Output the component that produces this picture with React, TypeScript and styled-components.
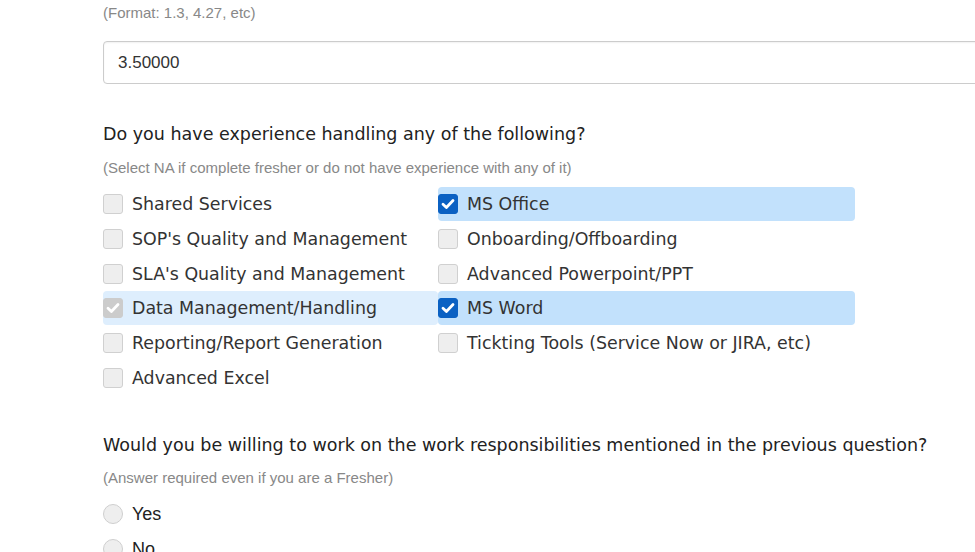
import React from 'react';
import styled, { createGlobalStyle } from 'styled-components';

const GlobalStyle = createGlobalStyle`
  html, body {
    margin: 0;
    padding: 0;
    background: #fff;
    overflow: hidden;
  }
`;

const Page = styled.div`
  padding: 3px 0 0 103px;
  width: 975px;
  height: 552px;
  box-sizing: border-box;
  overflow: hidden;
`;

const Hint = styled.div<{ $gapTop?: number }>`
  font-family: 'Liberation Sans', Arial, sans-serif;
  font-size: 15px;
  line-height: 20px;
  color: #888;
  margin-top: ${({ $gapTop }) => $gapTop ?? 0}px;
`;

const TextInput = styled.input`
  display: block;
  margin-top: 18px;
  width: 900px;
  height: 43px;
  box-sizing: border-box;
  border: 1px solid #ccc;
  border-radius: 4px;
  padding: 1px 14px 0;
  font-family: 'Liberation Sans', Arial, sans-serif;
  font-size: 17px;
  color: #333;
  box-shadow: inset 0 1px 2px rgba(0, 0, 0, 0.06);
  outline: none;
`;

const Question = styled.div<{ $gapTop: number }>`
  margin-top: ${({ $gapTop }) => $gapTop}px;
  font-family: 'DejaVu Sans', Verdana, sans-serif;
  font-size: 17.5px;
  line-height: 24px;
  color: #222;
`;

const OptionGrid = styled.div`
  margin-top: 9px;
  display: grid;
  grid-template-columns: 335px 417px;
  row-gap: 0.8px;
`;

const Option = styled.label<{ $state: 'on' | 'locked' | 'off' }>`
  display: flex;
  align-items: center;
  height: 34px;
  border-radius: 4px;
  background: ${({ $state }) =>
    $state === 'on' ? '#c2e1fc' : $state === 'locked' ? '#deeefd' : 'transparent'};
  font-family: 'DejaVu Sans', Verdana, sans-serif;
  font-size: 17.4px;
  color: #333;
`;

const Box = styled.span<{ $state: 'on' | 'locked' | 'off' }>`
  width: 20px;
  height: 20px;
  box-sizing: border-box;
  border-radius: 3px;
  margin-right: 9px;
  display: flex;
  align-items: center;
  justify-content: center;
  flex-shrink: 0;
  background: ${({ $state }) =>
    $state === 'on' ? '#0b61c3' : $state === 'locked' ? '#cccccc' : '#eeeeee'};
  border: 1px solid
    ${({ $state }) => ($state === 'on' ? '#0b61c3' : $state === 'locked' ? '#cccccc' : '#d0d0d0')};
`;

const RadioRow = styled.label`
  display: flex;
  align-items: center;
  height: 35px;
  font-family: 'Liberation Sans', Arial, sans-serif;
  font-size: 18px;
  color: #222;
`;

const RadioDot = styled.span`
  width: 20px;
  height: 20px;
  box-sizing: border-box;
  border-radius: 50%;
  border: 1px solid #cfcfcf;
  background: #eeeeee;
  margin-right: 9px;
  flex-shrink: 0;
`;

const RadioList = styled.div`
  margin-top: 9px;
`;

type State = 'on' | 'locked' | 'off';

const Tick = () => (
  <svg width="14" height="12" viewBox="0 0 14 12">
    <path d="M2 6.2 L5.4 9.4 L12 2.6" fill="none" stroke="#fff" strokeWidth="2.8" strokeLinecap="round" strokeLinejoin="round" />
  </svg>
);

const options: { label: string; state: State }[] = [
  { label: 'Shared Services', state: 'off' },
  { label: 'MS Office', state: 'on' },
  { label: "SOP's Quality and Management", state: 'off' },
  { label: 'Onboarding/Offboarding', state: 'off' },
  { label: "SLA's Quality and Management", state: 'off' },
  { label: 'Advanced Powerpoint/PPT', state: 'off' },
  { label: 'Data Management/Handling', state: 'locked' },
  { label: 'MS Word', state: 'on' },
  { label: 'Reporting/Report Generation', state: 'off' },
  { label: 'Tickting Tools (Service Now or JIRA, etc)', state: 'off' },
  { label: 'Advanced Excel', state: 'off' },
];

export default function App() {
  return (
    <>
      <GlobalStyle />
      <Page>
        <Hint>(Format: 1.3, 4.27, etc)</Hint>
        <TextInput defaultValue="3.50000" />

        <Question $gapTop={38}>Do you have experience handling any of the following?</Question>
        <Hint $gapTop={12}>(Select NA if complete fresher or do not have experience with any of it)</Hint>
        <OptionGrid>
          {options.map((o) => (
            <Option key={o.label} $state={o.state}>
              <Box $state={o.state}>{o.state !== 'off' && <Tick />}</Box>
              {o.label}
            </Option>
          ))}
        </OptionGrid>

        <Question $gapTop={38}>
          Would you be willing to work on the work responsibilities mentioned in the previous question?
        </Question>
        <Hint $gapTop={11}>(Answer required even if you are a Fresher)</Hint>
        <RadioList>
          <RadioRow>
            <RadioDot />
            Yes
          </RadioRow>
          <RadioRow>
            <RadioDot />
            No
          </RadioRow>
        </RadioList>
      </Page>
    </>
  );
}
